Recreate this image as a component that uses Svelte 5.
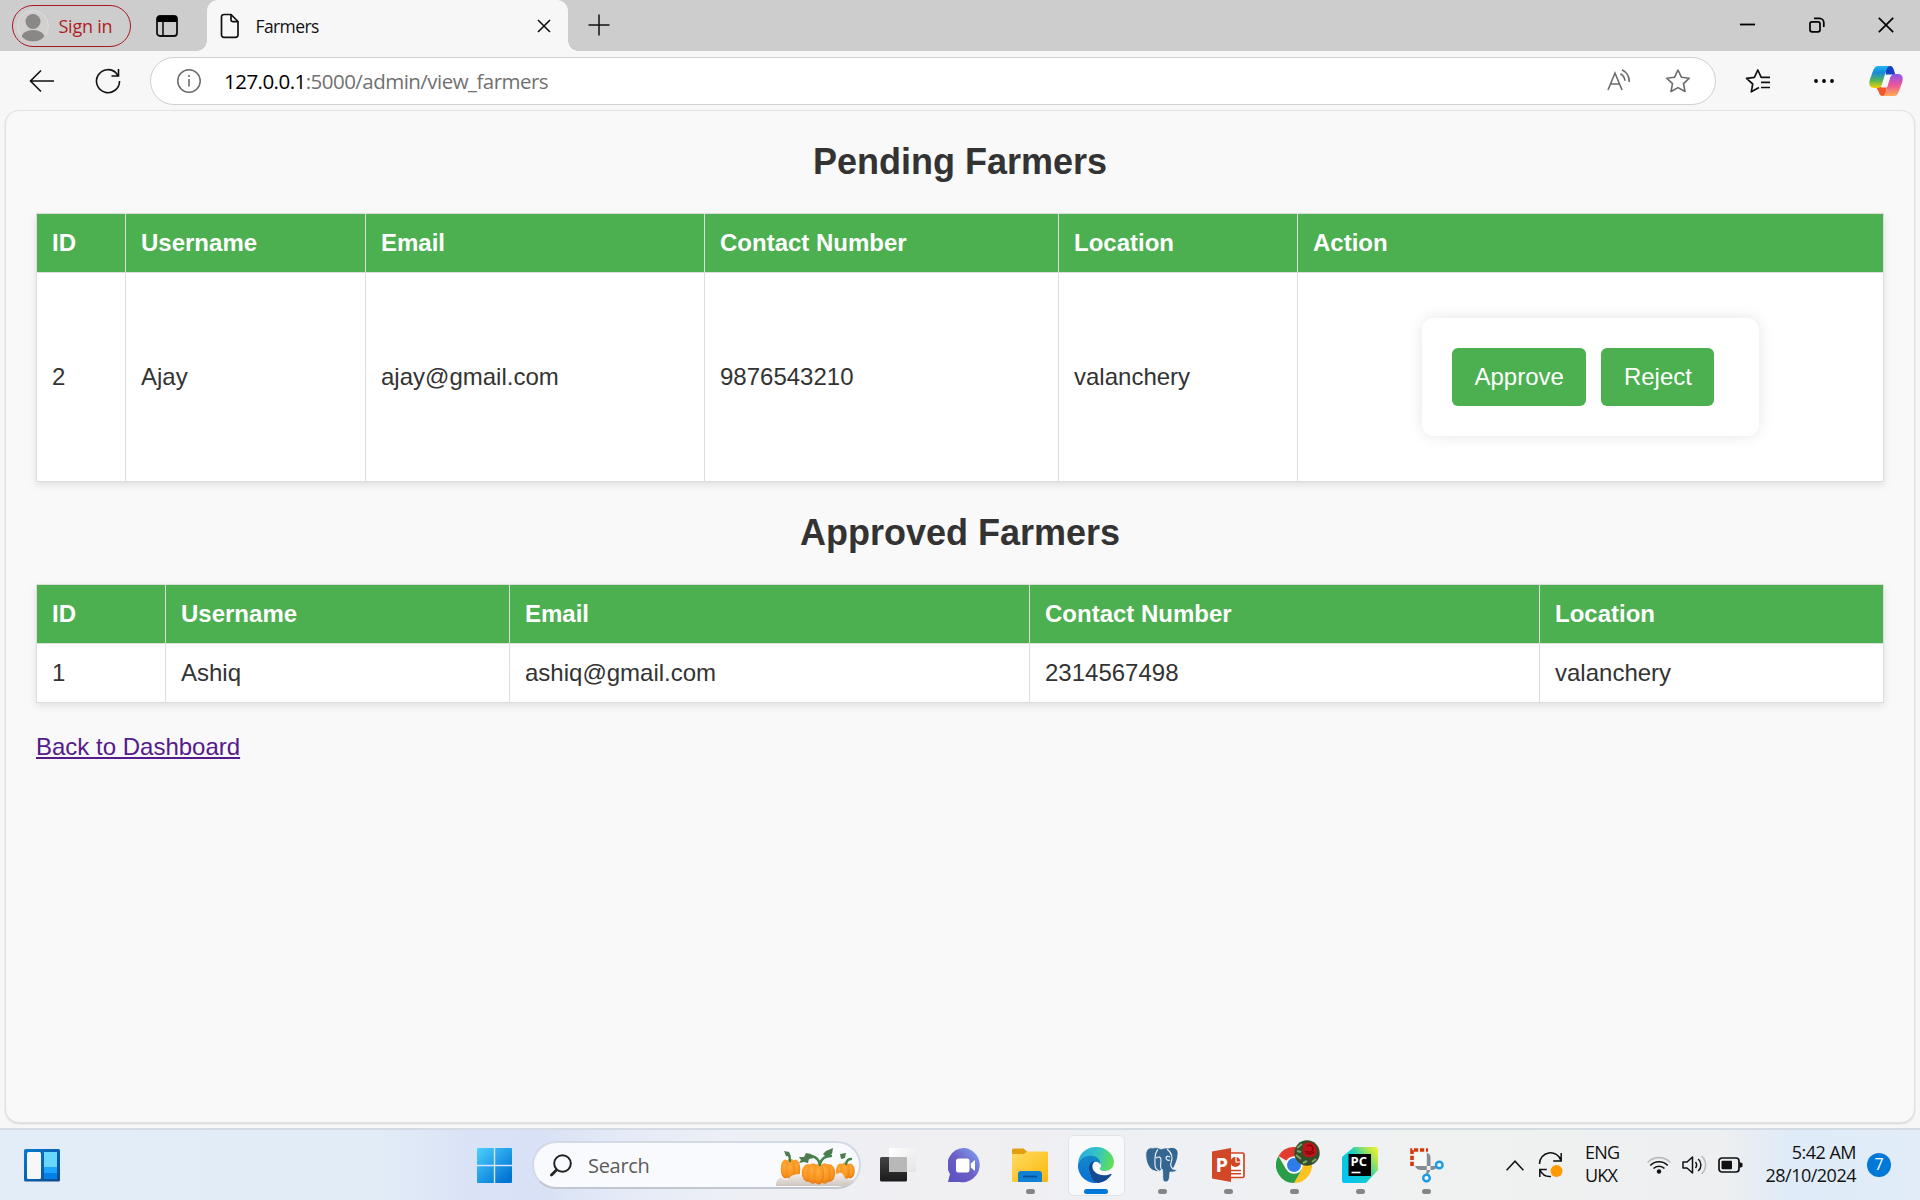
<script>
  const pending = {
    widths: [89, 240, 339, 354, 239, 586],
    head: ['ID', 'Username', 'Email', 'Contact Number', 'Location', 'Action'],
    row: ['2', 'Ajay', 'ajay@gmail.com', '9876543210', 'valanchery'],
  };
  const approved = {
    widths: [129, 344, 520, 510, 344],
    head: ['ID', 'Username', 'Email', 'Contact Number', 'Location'],
    row: ['1', 'Ashiq', 'ashiq@gmail.com', '2314567498', 'valanchery'],
  };
</script>

<div class="screen">
  <header class="tabs">
    <div class="signin">
      <svg width="32" height="32" viewBox="0 0 32 32">
        <defs><clipPath id="av"><circle cx="16" cy="16" r="15.5" /></clipPath></defs>
        <circle cx="16" cy="16" r="15.5" fill="#d2d0ce" stroke="#dedcda" />
        <g clip-path="url(#av)" fill="#8a8886"><ellipse cx="16" cy="11.5" rx="7.5" ry="7.5" /><ellipse cx="16" cy="27.5" rx="11.5" ry="7.5" /></g>
      </svg>
      <span>Sign in</span>
    </div>
    <svg class="side" width="22" height="22" viewBox="0 0 22 22"><rect x="1" y="1" width="20" height="20" rx="3" fill="none" stroke="#111" stroke-width="1.8" /><path d="M1 7V4a3 3 0 0 1 3-3h14a3 3 0 0 1 3 3v3z" fill="#000" /><path d="M7 6v15" stroke="#111" stroke-width="1.6" /></svg>
    <div class="tab">
      <svg width="20" height="26" viewBox="0 0 20 26" fill="none" stroke="#111" stroke-width="1.7" stroke-linejoin="round"><path d="M4 1.5h7l7 7V22a2.3 2.3 0 0 1-2.3 2.3H4A2.3 2.3 0 0 1 1.5 22V4A2.4 2.4 0 0 1 4 1.5z" /><path d="M11 1.5V7a1.6 1.6 0 0 0 1.6 1.6H18" /></svg>
      <span>Farmers</span>
      <svg class="x" width="14" height="14" viewBox="0 0 14 14" stroke="#111" stroke-width="1.6"><path d="M1 1l12 12M13 1L1 13" /></svg>
    </div>
    <svg class="plus" width="22" height="22" viewBox="0 0 22 22" stroke="#111" stroke-width="1.5"><path d="M11 .5v21M.5 11h21" /></svg>
    <div class="win">
      <svg width="15" height="16" viewBox="0 0 15 16"><path d="M0 7.500h15" stroke="#000" stroke-width="1.800" /></svg>
      <svg width="16" height="16" viewBox="0 0 16 16" fill="none" stroke="#000" stroke-width="1.700"><rect x="1" y="4.800" width="10" height="10" rx="2" /><path d="M5 1.300h5.500a4.300 4.300 0 0 1 4.300 4.300V10" /></svg>
      <svg width="16" height="16" viewBox="0 0 16 16" stroke="#000" stroke-width="1.700"><path d="M.8.8l14.400 14.400M15.200.8L.8 15.200" /></svg>
    </div>
  </header>

  <div class="toolbar">
    <svg class="back" width="26" height="24" viewBox="0 0 26 24" fill="none" stroke="#111" stroke-width="1.600"><path d="M25 12H2M12 1.500L1.500 12 12 22.500" /></svg>
    <svg class="reload" width="26" height="26" viewBox="0 0 26 26" fill="none" stroke="#111" stroke-width="1.600"><path d="M24.500 13A11.500 11.500 0 1 1 21.600 5.500L23 8" /><path d="M23.500 1v7h-7" /></svg>
    <div class="address">
      <svg width="24" height="24" viewBox="0 0 24 24"><circle cx="12" cy="12" r="11.200" fill="none" stroke="#6b6b6b" stroke-width="1.500" /><path d="M12 10v7.500" stroke="#6b6b6b" stroke-width="1.600" /><circle cx="12" cy="7" r="1.100" fill="#6b6b6b" /></svg>
      <span class="url"><b>127.0.0.1</b>:5000/admin/view_farmers</span>
      <svg class="aloud" width="24" height="24" viewBox="0 0 24 24" fill="none" stroke="#6b6b6b" stroke-width="1.600"><path d="M1 21L8 4l7 17M3.500 15h9M13.500 4.800a9 9 0 0 1 4.500 7M15 .8a13.500 13.500 0 0 1 7.300 12.300" /></svg>
      <svg class="star" width="26" height="26" viewBox="0 0 26 26" fill="none" stroke="#6b6b6b" stroke-width="1.600" stroke-linejoin="round"><path d="M13 2l3.400 7.200 7.900 1-5.800 5.400 1.500 7.900-7-3.900-7 3.900 1.500-7.900L1.700 10.200l7.900-1z" /></svg>
    </div>
    <svg class="fav" width="26" height="26" viewBox="0 0 26 26" fill="none" stroke="#111" stroke-width="1.700" stroke-linejoin="round"><path d="M14 19.500L6.300 23.800 7.700 16 1.500 10.400l7.900-1L12.800 2l3.400 7.400H25M16 14.300h9M16 19.500h9" /></svg>
    <svg class="dots" width="20" height="6" viewBox="0 0 20 6"><circle cx="2" cy="3" r="1.900" /><circle cx="10" cy="3" r="1.900" /><circle cx="18" cy="3" r="1.900" /></svg>
    <svg class="copilot" width="34" height="32" viewBox="0 0 34 32">
      <defs>
        <linearGradient id="c1" x1="0" y1="0" x2="0" y2="1"><stop offset="0" stop-color="#20b5f0" /><stop offset=".3" stop-color="#168bdc" /><stop offset=".65" stop-color="#52b45a" /><stop offset="1" stop-color="#f5d000" /></linearGradient>
        <linearGradient id="c2" x1="0" y1="0" x2="0" y2="1"><stop offset="0" stop-color="#8d54f0" /><stop offset=".5" stop-color="#ea5698" /><stop offset="1" stop-color="#ffac55" /></linearGradient>
      </defs>
      <path d="M16 1h5c2.500 0 3.500 2 4.200 5l1.300 4H17z" fill="#1741c5" />
      <path d="M7 22h11l-2 9h-2c-2.500 0-3.500-1-4.200-4z" fill="#f2582c" />
      <path d="M9 1h12c-2 0-3 2-4 5l-4 13c-1 3-2 4-5 4H5c-4 0-5.500-3-4.300-8L4 6c1-3 2.500-5 5-5z" fill="url(#c1)" />
      <path d="M25 31H13c2 0 3-2 4-5l4-13c1-3 2-4 5-4h3c4 0 5.500 3 4.300 8L30 26c-1 3-2.500 5-5 5z" fill="url(#c2)" />
      <path d="M17.500 9.500H24c-1.800.4-2.500 1.500-3.200 3.500l-3.300 9.500H12c1-.6 1.700-2 2.200-3.500z" fill="#f7f7f7" />
    </svg>
  </div>

  <main>
    <h2>Pending Farmers</h2>
    <table>
      <colgroup>{#each pending.widths as w}<col style="width:{w}px" />{/each}</colgroup>
      <thead><tr>{#each pending.head as h}<th>{h}</th>{/each}</tr></thead>
      <tbody>
        <tr class="tall">
          {#each pending.row as c}<td>{c}</td>{/each}
          <td class="act"><form><button type="button">Approve</button><button type="button">Reject</button></form></td>
        </tr>
      </tbody>
    </table>
    <h2>Approved Farmers</h2>
    <table>
      <colgroup>{#each approved.widths as w}<col style="width:{w}px" />{/each}</colgroup>
      <thead><tr>{#each approved.head as h}<th>{h}</th>{/each}</tr></thead>
      <tbody><tr>{#each approved.row as c}<td>{c}</td>{/each}</tr></tbody>
    </table>
    <a href="#dashboard">Back to Dashboard</a>
  </main>

  <footer>
    <svg class="widgets" width="36" height="33" viewBox="0 0 36 33">
      <defs><linearGradient id="w1" x1="0" y1="0" x2="1" y2="1"><stop offset="0" stop-color="#0a7bd0" /><stop offset="1" stop-color="#0b4a8c" /></linearGradient></defs>
      <rect width="36" height="32.500" rx="1.500" fill="url(#w1)" /><rect x="3" y="3" width="14" height="27" rx="1.500" fill="#f7f7f7" /><path d="M20 3h13v15H20z" fill="#68d8ff" /><path d="M20 18h13v6H20z" fill="#1ba5fb" /><path d="M20 24h13v6H20z" fill="#0580e8" />
    </svg>
    <div class="slot start">
      <svg width="35" height="35" viewBox="0 0 35 35"><defs><linearGradient id="s1" gradientUnits="userSpaceOnUse" x1="0" y1="0" x2="30" y2="32"><stop offset="0" stop-color="#4cd0ff" /><stop offset="1" stop-color="#0074d3" /></linearGradient></defs><path d="M1 0h15.800v16.800H0V1a1 1 0 0 1 1-1zM18.200 0H34a1 1 0 0 1 1 1v15.800H18.200zM0 18.200h16.800V35H1a1 1 0 0 1-1-1zM18.200 18.200H35V34a1 1 0 0 1-1 1H18.200z" fill="url(#s1)" /></svg>
    </div>
    <div class="search">
      <svg width="22" height="23" viewBox="0 0 22 23" fill="none" stroke="#222" stroke-linecap="round"><circle cx="12.500" cy="9.500" r="8.300" stroke-width="2" /><path d="M6.500 16L1.500 21" stroke-width="2.800" /></svg>
      <span>Search</span>
      <svg class="pumpkins" width="80" height="38" viewBox="0 0 80 38">
        <defs><radialGradient id="p1" cx=".45" cy=".35" r=".75"><stop offset="0" stop-color="#ffad3d" /><stop offset=".6" stop-color="#f7931e" /><stop offset="1" stop-color="#dc6c0c" /></radialGradient>
        <linearGradient id="p2" x1="0" y1="0" x2="0" y2="1"><stop offset="0" stop-color="#f3efec" /><stop offset="1" stop-color="#cfc6c0" /></linearGradient></defs>
        <g fill="url(#p1)"><ellipse cx="9.500" cy="21" rx="4.800" ry="9.500" /><ellipse cx="19.500" cy="21" rx="4.800" ry="9.500" /><ellipse cx="14.500" cy="21" rx="5" ry="10.500" /></g>
        <g fill="url(#p1)"><ellipse cx="64.500" cy="23" rx="4.500" ry="7.500" /><ellipse cx="74" cy="23" rx="4.800" ry="7.500" /><ellipse cx="69" cy="23" rx="4.800" ry="8.800" /></g>
        <path d="M0 38c0-5 2-9 6-8 3 3 5 2 7 0 3-4 10-5 15-2 6 4 24 4 32-1 4-4 7-2 9 3 4 2 6 2 9 1-2 4-5 7-9 7z" fill="url(#p2)" />
        <g fill="url(#p1)"><ellipse cx="32" cy="25" rx="6.300" ry="9" /><ellipse cx="53" cy="25" rx="6.300" ry="9" /><ellipse cx="37" cy="25.500" rx="6.300" ry="10.300" /><ellipse cx="48.500" cy="25.500" rx="6.300" ry="10.300" /><ellipse cx="42.700" cy="26" rx="5.500" ry="10.500" /></g>
        <path d="M44 17q-1-7-8-9M44 16q2-8 11-8M14 13q0-5-2-8M70 16q1-5 5-5" fill="none" stroke="#43854f" stroke-width="2.400" stroke-linecap="round" />
        <path d="M23 9l5 0 2-4 5 1 3 4-5 1-1 4-4-1-5 1 2-3zM50 3l7-3-1 6-6 3-3-3zM8 3l5 1 2 5-5-1zM64 6l6-1-1 5-4 1z" fill="#4d7d4e" />
      </svg>
    </div>
    <div class="slot">
      <svg width="36" height="34" viewBox="0 0 36 34"><defs><linearGradient id="t1" x1="0" y1="0" x2="0" y2="1"><stop offset="0" stop-color="#444" /><stop offset="1" stop-color="#1a1a1a" /></linearGradient><linearGradient id="t2" x1="0" y1="0" x2="1" y2="1"><stop offset="0" stop-color="#fff" /><stop offset="1" stop-color="#e4e4e6" /></linearGradient></defs><rect y="9" width="27" height="24.500" rx="1.500" fill="url(#t1)" /><rect x="9" width="27" height="24" rx="1" fill="url(#t2)" /><path d="M9 9h18v15H10a1 1 0 0 1-1-1z" fill="#b8b8b8" /></svg>
    </div>
    <div class="slot">
      <svg class="teams" width="34" height="35" viewBox="0 0 34 35"><defs><linearGradient id="m1" x1="0" y1="1" x2="1" y2="0"><stop offset="0" stop-color="#5a50c0" /><stop offset=".5" stop-color="#6b5fc6" /><stop offset="1" stop-color="#82a8f5" /></linearGradient></defs><path d="M17 0a17 17 0 1 1-5 34H0l2-8A17 17 0 0 1 17 0z" fill="url(#m1)" /><rect x="8" y="10.500" width="13.500" height="14" rx="2.500" fill="#fff" /><path d="M22.800 15.500l4.200-3.500v11l-4.200-3.500z" fill="#fff" /></svg>
    </div>
    <div class="slot run">
      <svg width="36" height="34" viewBox="0 0 36 34"><defs><linearGradient id="f1" x1="0" y1="0" x2="1" y2="1"><stop offset="0" stop-color="#ffdc62" /><stop offset="1" stop-color="#fbb70c" /></linearGradient></defs><path d="M0 2A1.500 1.500 0 0 1 1.500.5h10L15 3.500v6H0z" fill="#e0a010" /><path d="M0 6h12l3-2.500h19.500A1.500 1.500 0 0 1 36 5v27.500a1.500 1.500 0 0 1-1.500 1.500h-33A1.500 1.500 0 0 1 0 32.500z" fill="url(#f1)" /><path d="M6 34v-8a3 3 0 0 1 3-3h18a3 3 0 0 1 3 3v8z" fill="#1280d4" /><path d="M11 28.500h14" stroke="#0a5198" stroke-width="1.800" /></svg>
    </div>
    <div class="slot active">
      <svg width="36" height="36" viewBox="0 0 36 36"><defs>
        <linearGradient id="e1" x1="0" y1=".3" x2="1" y2=".5"><stop offset="0" stop-color="#2ba9df" /><stop offset=".5" stop-color="#32c4c5" /><stop offset="1" stop-color="#63e054" /></linearGradient>
        <linearGradient id="e2" x1="0" y1="0" x2="0" y2="1"><stop offset="0" stop-color="#1388c8" /><stop offset="1" stop-color="#0a6fd8" /></linearGradient></defs>
        <path d="M0 16C1 6 9 0 18 0c11 0 18 8 18 15 0 6-5 9-9 9-4 0-6-1.500-5-3 1.500-1.500 1.500-3 0-6-4-6-15-6-22 1z" fill="url(#e1)" />
        <path d="M0 17C3 10 10 8 15 9c5 .8 8 5 7.500 9-1-3-5-4.500-8-2-3 3-4 9-1 14 2 3 4 5 6 6C8 37-1 28 0 17z" fill="url(#e2)" />
        <path d="M11 21c0-4 3-7 6-7-2 1.500-4 6-1 10 4 5 12 5 16.500 3 1-.4 1.200.3.800 1C29 34 23 36 19.500 36 14 34 11 27 11 21z" fill="#124a91" />
      </svg>
    </div>
    <div class="slot run">
      <svg width="34" height="36" viewBox="0 0 34 36"><path d="M8 1c3-1 6 0 8 1 3-1.500 6-1 8-1 4-1.500 8 0 9 4 .5 5-2 12-5 17 1 1 3 0 4 .5-1 2.500-4 3-7 2.500-.5 4 0 8-2.500 9.500-2 1-4 .5-4.500-1.500-.8-4 .3-8-1-11-2 3-5 3-7 2C4 23 .5 15 .8 7 1 2 5 0 8 1z" fill="#336791" stroke="#f8f8f8" stroke-width=".8" /><path d="M13 2.500C9 6 10 12 10 18c0 3 2 5 4 6M11 11c3-2 5-1 5 2s-1 5 0 9M22 2c5 4 6 9 4 14-1 2 0 4 2 6M25 10c-2-1.500-4-.5-4 1s2 3 4 2" fill="none" stroke="#f4f6f8" stroke-width="1.100" /></svg>
    </div>
    <div class="slot run">
      <svg width="33" height="34" viewBox="0 0 33 34"><rect x="15" y="5" width="17" height="24.500" rx="1.500" fill="#fff" stroke="#d04423" stroke-width="1.700" /><path d="M19 22.500h10M19 25.800h10" stroke="#d04423" stroke-width="1.600" /><circle cx="23.500" cy="14" r="5" fill="#d04423" /><path d="M24 8v6h6" fill="none" stroke="#fff" stroke-width="1.200" /><path d="M0 3.500L19 0v34L0 30.500z" fill="#d24726" /><text x="3.500" y="23.500" class="ppt">P</text></svg>
    </div>
    <div class="slot run chrome">
      <svg width="36" height="36" viewBox="0 0 36 36"><path d="M18 18L2.400 9A18 18 0 0 1 33.600 9z" fill="#e33b2e" /><path d="M18 18V9h15.600A18 18 0 0 1 18 36l8-13.500z" fill="#fcc31e" /><path d="M18 18l7.800 4.500L18 36A18 18 0 0 1 2.400 9l7.800 13.500z" fill="#2a9d49" /><circle cx="18" cy="18" r="8.800" fill="#fff" /><circle cx="18" cy="18" r="7" fill="#2f7be9" /></svg>
      <svg class="rose" width="26" height="26" viewBox="0 0 26 26"><circle cx="13" cy="13" r="12.700" fill="#334f2a" /><path d="M3 8l5-4M2 15l5 4M18 22l4-3M3 11l4 1M9 23l4-2" stroke="#7fa06a" stroke-width="2" /><path d="M10 4c4-3 10-2 12 3s0 9-4 10-8 0-9-4 0-7 1-9z" fill="#c2121a" /><path d="M13 6c4-2 6 0 6 3s-4 4-6 2M11 11c2 4 6 4 9 1" fill="none" stroke="#7a060c" stroke-width="1.200" /></svg>
    </div>
    <div class="slot run">
      <svg width="36" height="36" viewBox="0 0 36 36"><defs><linearGradient id="y1" x1="0" y1=".7" x2="1" y2="0"><stop offset="0" stop-color="#07c3f2" /><stop offset=".45" stop-color="#12cfc5" /><stop offset=".75" stop-color="#a5e358" /><stop offset="1" stop-color="#fcf52a" /></linearGradient></defs><path d="M12 0h22a2 2 0 0 1 2 2v21L24 36H2a2 2 0 0 1-2-2V10z" fill="url(#y1)" /><path d="M6.500 7H29v22H6.500z" fill="#000" /><text x="8.500" y="18.500" class="pc">PC</text><path d="M9.500 25.500h9" stroke="#fff" stroke-width="1.600" /></svg>
    </div>
    <div class="slot run">
      <svg class="snip" width="34" height="35" viewBox="0 0 34 35"><path d="M5 5h14v14H5z" fill="#f8f8f8" /><path d="M2 18V2h16" fill="none" stroke="#d43a0c" stroke-width="3.600" stroke-dasharray="4.200 1.800" /><path d="M16 4.500q4.500 1 4.500 5V22l-3 5h-1.500l.8-6V4.500zM5 18q1.500 4 6 4H23l4-2v-2z" fill="#868c94" /><circle cx="18.500" cy="20" r="1" fill="#e8e8e8" /><circle cx="29.300" cy="17" r="3.300" fill="#f4fbff" stroke="#1d9be6" stroke-width="2.400" /><circle cx="16.500" cy="30" r="3.300" fill="#f4fbff" stroke="#1d9be6" stroke-width="2.400" /></svg>
    </div>
    <div class="tray">
      <svg class="chev" width="18" height="11" viewBox="0 0 18 11" fill="none" stroke="#111" stroke-width="1.500"><path d="M.6 10.200L9 1.200l8.400 9" /></svg>
      <svg class="upd" width="26" height="26" viewBox="0 0 26 26" fill="none" stroke="#111" stroke-width="1.500"><path d="M1.500 12A11 11 0 0 1 23 8.500M23.200 1v8h-8M1.800 25v-7.500h7M2 18a11 11 0 0 0 11 6.500" /><circle cx="18.500" cy="19" r="6" fill="#f90" stroke="none" /></svg>
      <div class="lang"><span>ENG</span><span>UKX</span></div>
      <svg class="wifi" width="24" height="18" viewBox="0 0 24 18" fill="none" stroke="#111" stroke-width="1.600"><path d="M.6 6.500a15.700 15.700 0 0 1 22.800 0" stroke="#bbb" /><path d="M3.300 9.500a12 12 0 0 1 17.400 0M6.500 12.500a7.700 7.700 0 0 1 11 0" /><circle cx="12" cy="15.500" r="2.200" fill="#111" stroke="none" /></svg>
      <svg class="vol" width="25" height="20" viewBox="0 0 25 20" fill="none" stroke="#111" stroke-width="1.500" stroke-linejoin="round"><path d="M1 7h4l5.500-5v16L5 13H1zM13.500 7a5 5 0 0 1 0 6M16.200 4a8 8 0 0 1 0 12" /><path d="M19.500 1a12 12 0 0 1 0 18" stroke="#bbb" /></svg>
      <svg class="bat" width="25" height="16" viewBox="0 0 25 16"><rect x="1" y="1" width="20" height="14" rx="3" fill="none" stroke="#111" stroke-width="1.700" /><rect x="3.500" y="3.700" width="10.500" height="8.600" rx="1" fill="#111" /><path d="M21.500 5l3 1.200v3.600l-3 1.200z" fill="#111" /></svg>
      <div class="clock"><span>5:42 AM</span><span>28/10/2024</span></div>
      <div class="badge">7</div>
    </div>
  </footer>
</div>

<style>
  :global(body) { margin: 0; background: #f7f7f7; }
  .screen { width: 1920px; height: 1200px; display: flex; flex-direction: column; overflow: hidden; background: #f7f7f7; font-family: 'Open Sans', 'Noto Sans', sans-serif; color: #111; }
  svg { display: block; flex: none; }
  .tabs { height: 51px; flex: none; display: flex; align-items: center; background: #cdcdcd; }
  .signin { box-sizing: border-box; width: 119px; height: 42px; margin-left: 11.5px; border: 1.5px solid #a8191f; border-radius: 21px; display: flex; align-items: center; padding-left: 4px; gap: 10px; color: #b01c24; font-size: 18px; letter-spacing: -0.25px; white-space: nowrap; }
  .side { margin-left: 25px; }
  .tab { position: relative; box-sizing: border-box; width: 361px; height: 51px; margin-left: 29px; padding: 0 17px 0 13px; display: flex; align-items: center; background: #f7f7f7; border-radius: 11px 11px 0 0; font-size: 17.5px; letter-spacing: -0.6px; }
  .tab::before, .tab::after { content: ''; position: absolute; bottom: 0; width: 10px; height: 10px; }
  .tab::before { left: -10px; background: radial-gradient(circle at 0 0, #cdcdcd 9.5px, #f7f7f7 10px); }
  .tab::after { right: -10px; background: radial-gradient(circle at 100% 0, #cdcdcd 9.5px, #f7f7f7 10px); }
  .tab span { margin-left: 16px; }
  .x { margin-left: auto; }
  .plus { margin-left: 20px; margin-bottom: 2px; }
  .win { margin-left: auto; margin-right: 26px; margin-bottom: 1px; display: flex; gap: 53.5px; }
  .toolbar { height: 59px; flex: none; display: flex; align-items: center; }
  .back { margin-left: 29px; }
  .reload { margin-left: 40px; }
  .address { box-sizing: border-box; width: 1566px; height: 48px; margin-left: 29px; border: 1.5px solid #cfcfcf; border-radius: 24px; background: #fff; display: flex; align-items: center; padding: 0 24px 0 26px; }
  .url { margin-left: 23px; padding-top: 1px; font-size: 20.5px; color: #717171; letter-spacing: -0.53px; }
  .url b { font-weight: 400; color: #000; }
  .aloud { margin-left: auto; margin-right: 34px; }
  .fav { margin-left: 29px; }
  .dots { margin-left: 43px; }
  .copilot { margin-left: 35px; }
  main { box-sizing: border-box; width: 1910px; height: 1013px; flex: none; margin: 0 0 0 5px; padding: 0 30px; border: 1px solid #e2e2e2; border-radius: 14px; background: #f9f9f9; box-shadow: 0 1px 2px #0002; font-family: 'Liberation Sans', Arial, sans-serif; font-size: 24px; color: #333; }
  h2 { margin: 30px 0; font-size: 36px; line-height: 42px; text-align: center; }
  table { width: 1848px; table-layout: fixed; border-collapse: collapse; margin: 0 0 30px; background: #fff; box-shadow: 0 3px 7.5px rgba(0, 0, 0, 0.1); }
  th, td { box-sizing: border-box; height: 59px; padding: 0 15px 2px; border: 1px solid #ddd; text-align: left; line-height: 27px; }
  th { background: #4caf50; color: #fff; }
  .tall td { height: 209px; }
  .tall .act { padding-bottom: 0; }
  form { box-sizing: border-box; width: 337px; height: 118px; margin: 0 auto; padding: 30px; display: flex; gap: 15px; border-radius: 12px; background: #fff; box-shadow: 0 0 15px rgba(0, 0, 0, 0.1); }
  button { height: 58px; padding: 0 22.5px; border: 0; border-radius: 6px; background: #4caf50; color: #fff; font: 24px 'Liberation Sans', Arial, sans-serif; }
  a { color: #551a8b; }
  footer { height: 72px; flex: none; margin-top: auto; display: flex; align-items: center; box-sizing: border-box; border-top: 2px solid #d5dbe3; background: linear-gradient(90deg, #e3edf7 0, #e2ecf7 380px, #d9e2f6 480px, #d8e1f5 540px, #e4eaf7 620px, #eceff5 720px, #f0eff2 950px, #eef0f4 1150px, #f0f1f1 1440px, #eeeff0 1720px, #dfebf8 1790px, #e1ecf8 1920px); }
  .widgets { margin-left: 24px; }
  .slot { position: relative; width: 66px; height: 70px; flex: none; display: flex; align-items: center; justify-content: center; }
  .start { margin-left: 401px; }
  .search { box-sizing: border-box; width: 329px; height: 48px; margin: 0 4px 0 5px; border: 2px solid #d3d9e5; border-bottom-color: #c2c6cf; border-radius: 24px; background: #f9fafd; display: flex; align-items: center; padding: 0 3px 0 16px; font-size: 20px; color: #5c5c5c; }
  .search span { margin-left: 16px; letter-spacing: -0.3px; }
  .pumpkins { margin-left: auto; margin-top: 3px; }
  .teams, .snip { margin-left: 1.5px; }
  .run::after, .active::after { content: ''; position: absolute; bottom: 6px; left: 28.5px; width: 9px; height: 5px; border-radius: 3px; background: #858585; }
  .active::after { left: 21px; width: 24px; background: #0078d7; }
  .active::before { content: ''; position: absolute; inset: 5px 4.5px 4px; border-radius: 6px; background: #f8f9fb; border: 1.5px solid #e1e2e5; box-sizing: border-box; }
  .active svg { position: relative; }
  .rose { position: absolute; left: 33px; top: 10px; }
  .ppt { font: bold 20px 'Open Sans', sans-serif; fill: #fff; }
  .pc { font: bold 13px 'Open Sans', sans-serif; fill: #fff; }
  .tray { display: flex; align-items: center; margin-left: 47px; height: 70px; font-size: 18px; line-height: 23px; }
  .lang, .clock { display: flex; flex-direction: column; margin-top: -2px; }
  .lang { width: 35px; margin-left: 21px; letter-spacing: -0.8px; }
  .upd { margin-left: 14px; }
  .wifi { margin-left: 27px; }
  .vol { margin-left: 11px; }
  .bat { margin-left: 11px; }
  .clock { width: 92px; margin-left: 21px; align-items: flex-end; letter-spacing: -0.5px; white-space: nowrap; }
  .badge { width: 24px; height: 24px; margin-left: 11px; border-radius: 50%; background: #0078d7; color: #fff; text-align: center; line-height: 23px; font-size: 16px; }
</style>
